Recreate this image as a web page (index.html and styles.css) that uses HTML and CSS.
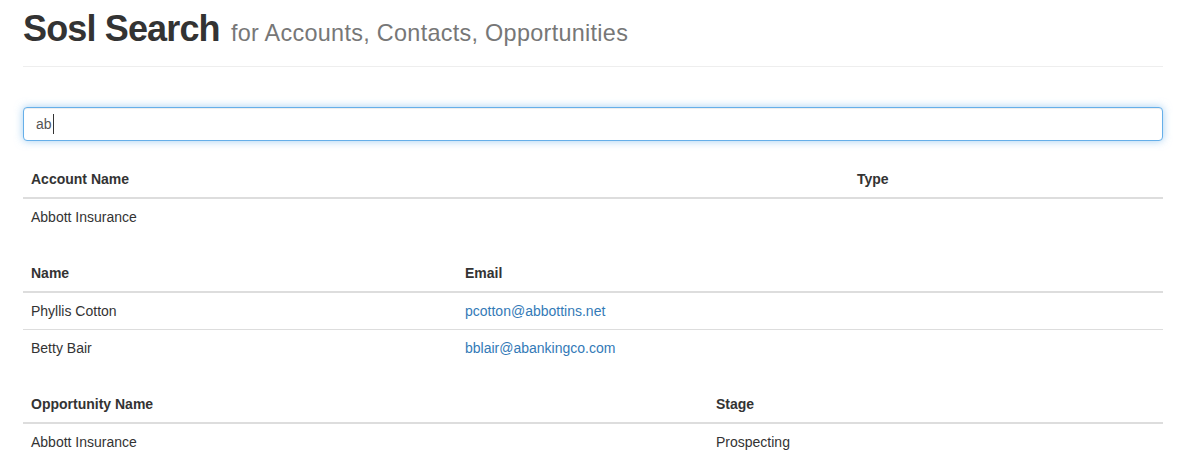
FILE: index.html
```html
<!DOCTYPE html>
<html>
<head>
<meta charset="utf-8">
<title>Sosl Search</title>
<link rel="stylesheet" href="styles.css">
</head>
<body>
<div class="container">
  <div class="page-header">
    <h1>Sosl Search <small>for Accounts, Contacts, Opportunities</small></h1>
  </div>
  <div class="search-wrap">
    <input class="search" type="text" value="ab">
    <span class="caret"></span>
  </div>
  <table class="table">
    <thead>
      <tr><th class="w-acc">Account Name</th><th>Type</th></tr>
    </thead>
    <tbody>
      <tr><td>Abbott Insurance</td><td></td></tr>
    </tbody>
  </table>
  <table class="table">
    <thead>
      <tr><th class="w-con">Name</th><th>Email</th></tr>
    </thead>
    <tbody>
      <tr><td>Phyllis Cotton</td><td><a href="#">pcotton@abbottins.net</a></td></tr>
      <tr><td>Betty Bair</td><td><a href="#">bblair@abankingco.com</a></td></tr>
    </tbody>
  </table>
  <table class="table">
    <thead>
      <tr><th class="w-opp">Opportunity Name</th><th>Stage</th></tr>
    </thead>
    <tbody>
      <tr><td>Abbott Insurance</td><td>Prospecting</td></tr>
    </tbody>
  </table>
</div>
</body>
</html>
```

FILE: styles.css
```css
* { box-sizing: border-box; }
html, body { margin: 0; padding: 0; background: #fff; }
body {
  font-family: "Liberation Sans", Arial, Helvetica, sans-serif;
  font-size: 14px;
  line-height: 1.42857143;
  color: #333;
}
.container {
  width: 1140px;
  margin-left: 23px;
  padding-top: 9px;
}
.page-header {
  padding-bottom: 13px;
  border-bottom: 1px solid #eee;
  margin-bottom: 40px;
}
.page-header h1 {
  margin: 0;
  font-size: 36px;
  font-weight: bold;
  line-height: 40px;
  color: #333;
  letter-spacing: -0.85px;
}
.page-header h1 small {
  font-size: 23.4px;
  font-weight: 400;
  color: #777;
  letter-spacing: 0.3px;
  margin-left: 2px;
}
.search-wrap {
  position: relative;
  margin-bottom: 20px;
}
.search {
  display: block;
  width: 100%;
  height: 34px;
  padding: 6px 12px;
  font-family: inherit;
  font-size: 14px;
  line-height: 1.42857143;
  color: #555;
  background: #fff;
  border: 1px solid #66afe9;
  border-radius: 4px;
  outline: 0;
  box-shadow: inset 0 1px 1px rgba(0,0,0,.075), 0 0 8px rgba(102,175,233,.6);
}
.caret {
  position: absolute;
  left: 30px;
  top: 7px;
  width: 1px;
  height: 20px;
  background: #333;
}
.table {
  width: 100%;
  border-collapse: collapse;
  border-spacing: 0;
  table-layout: fixed;
  margin-bottom: 20px;
}
.table th, .table td {
  padding: 8px;
  line-height: 20px;
  text-align: left;
  vertical-align: top;
}
.table th {
  font-weight: bold;
  border-bottom: 2px solid #ddd;
  vertical-align: bottom;
}
.table td { border-top: 1px solid #ddd; }
.w-acc { width: 826px; }
.w-con { width: 434px; }
.w-opp { width: 685px; }
a { color: #337ab7; text-decoration: none; }
```
